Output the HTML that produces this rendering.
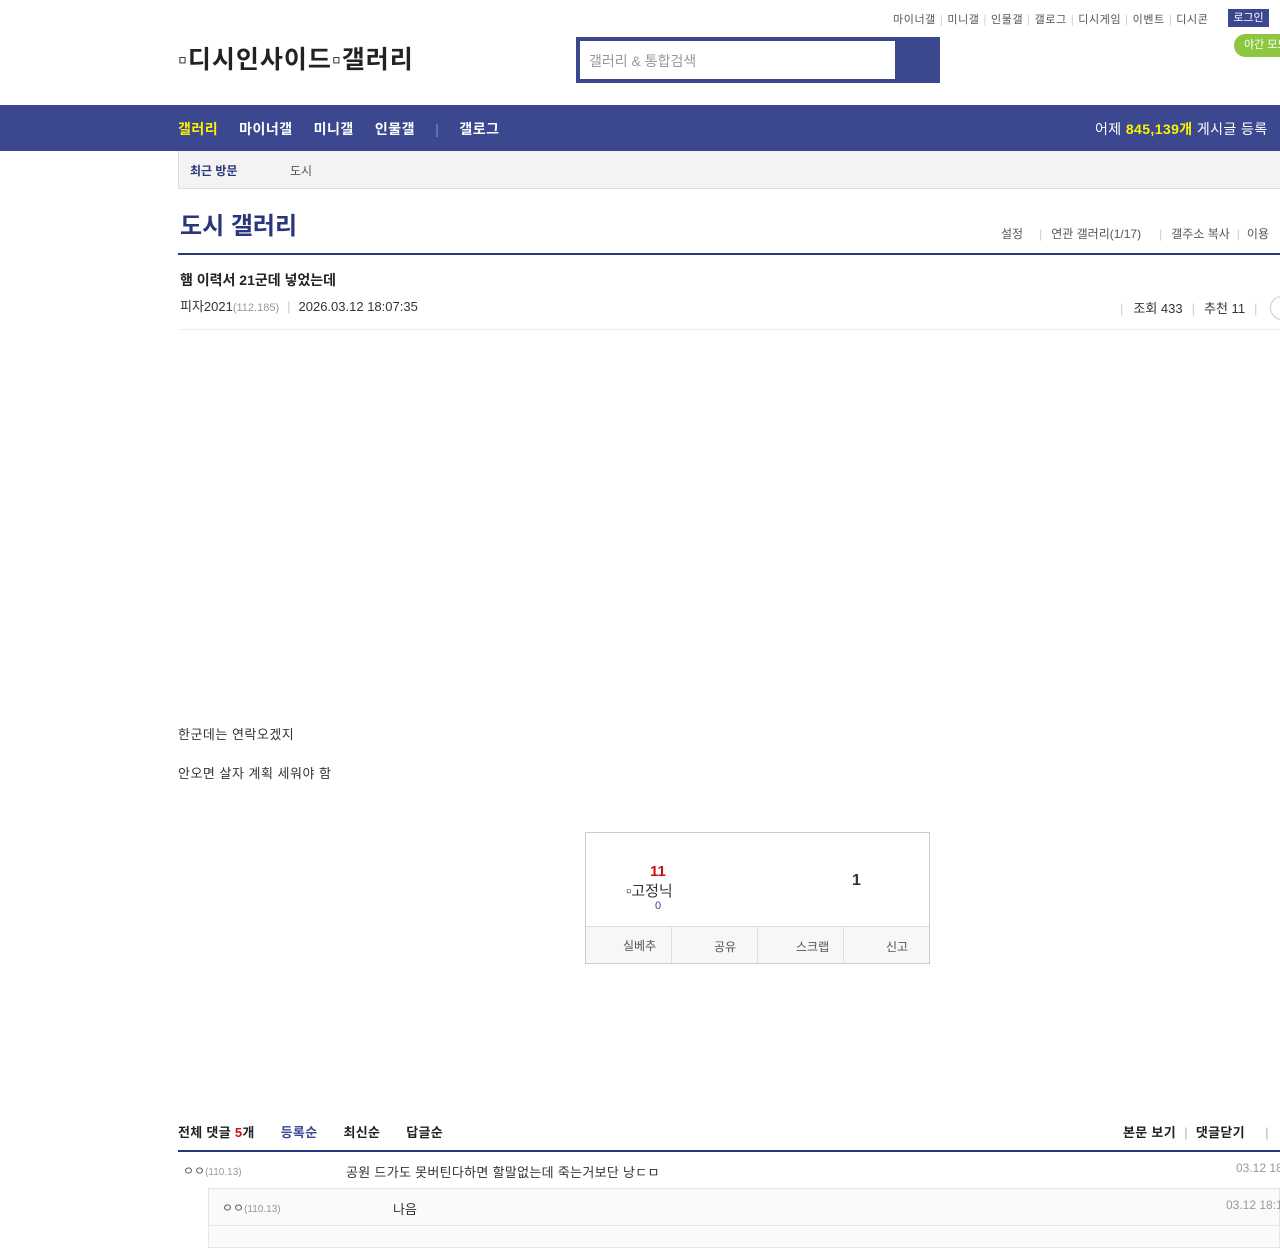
<!DOCTYPE html>
<html><head><meta charset="utf-8"><style>
*{margin:0;padding:0;box-sizing:border-box}
body{width:1280px;height:1240px;position:relative;overflow:hidden;background:#fff;font-family:"Liberation Sans","Noto Sans CJK KR",sans-serif;color:#333}
.a{position:absolute;white-space:nowrap}
.sep{color:#ccc;margin:0 4px}
</style></head><body>
<div class="a" style="left:893px;top:11px;font-size:11px;color:#555;letter-spacing:0.6px">마이너갤<span class="sep">|</span>미니갤<span class="sep">|</span>인물갤<span class="sep">|</span>갤로그<span class="sep">|</span>디시게임<span class="sep">|</span>이벤트<span class="sep">|</span>디시콘</div>
<div class="a" style="left:1228px;top:9px;width:41px;height:18px;background:#3b4890;color:#fff;font-size:11px;text-align:center;line-height:18px">로그인</div>
<div class="a" style="left:1234px;top:34px;width:60px;height:23px;background:#8dc63f;border-radius:12px;color:#fff;font-size:11px;line-height:23px;padding-left:10px">야간 모드</div>
<div class="a" style="left:178px;top:40px;font-size:25px;font-weight:bold;color:#222;letter-spacing:1px">▫디시인사이드▫갤러리</div>
<div class="a" style="left:576px;top:37px;width:364px;height:46px;background:#3b4890"></div>
<div class="a" style="left:580px;top:41px;width:315px;height:38px;background:#fff;font-size:14px;color:#999;padding:10px 9px">갤러리 &amp; 통합검색</div>
<div class="a" style="left:0;top:105px;width:1280px;height:46px;background:#3b4890"></div>
<div class="a" style="left:178px;top:119px;font-size:14px;font-weight:bold;color:#fff;letter-spacing:0.5px"><span style="color:#fff200">갤러리</span><span style="margin-left:21px">마이너갤</span><span style="margin-left:21px">미니갤</span><span style="margin-left:21px">인물갤</span><span style="color:#6a76b0;margin:0 20px 0 20px">|</span>갤로그</div>
<div class="a" style="left:1095px;top:119px;font-size:14px;color:#fff;letter-spacing:0.4px">어제 <b style="color:#fff200">845,139개</b> 게시글 등록</div>
<div class="a" style="left:178px;top:151px;width:1110px;height:38px;background:#f3f3f3;border:1px solid #ddd;border-top:0"></div>
<div class="a" style="left:190px;top:162px;font-size:12px;font-weight:bold;color:#29367c">최근 방문</div>
<div class="a" style="left:290px;top:162px;font-size:12px;color:#555">도시</div>
<div class="a" style="left:180px;top:206px;font-size:24px;font-weight:bold;color:#29367c">도시 갤러리</div>
<div class="a" style="left:1001px;top:225px;font-size:12px;color:#555">설정<span class="sep" style="margin:0 9px 0 16px">|</span>연관 갤러리(1/17)<span class="sep" style="margin:0 9px 0 18px">|</span>갤주소 복사<span class="sep" style="margin:0 7px">|</span>이용</div>
<div class="a" style="left:178px;top:253px;width:1102px;height:2px;background:#29367c"></div>
<div class="a" style="left:180px;top:270px;font-size:14px;font-weight:bold;color:#222">햄 이력서 21군데 넣었는데</div>
<div class="a" style="left:180px;top:296px;font-size:13px;color:#333">피자2021<span style="font-size:11px;color:#999">(112.185)</span><span class="sep" style="margin:0 8px">|</span>2026.03.12 18:07:35</div>
<div class="a" style="left:1120px;top:298px;font-size:13px;color:#333"><span class="sep" style="margin:0 10px 0 0">|</span>조회 433<span class="sep" style="margin:0 9px">|</span>추천 11<span class="sep" style="margin:0 9px">|</span></div>
<div class="a" style="left:1270px;top:296px;width:24px;height:24px;border:1px solid #ccc;border-radius:12px"></div>
<div class="a" style="left:178px;top:329px;width:1102px;height:1px;background:#eee"></div>
<div class="a" style="left:178px;top:724px;font-size:13px;color:#333;letter-spacing:0.5px">한군데는 연락오겠지</div>
<div class="a" style="left:178px;top:763px;font-size:13px;color:#333;letter-spacing:0.5px">안오면 살자 계획 세워야 함</div>
<div class="a" style="left:585px;top:832px;width:345px;height:132px;border:1px solid #ccc"></div>
<div class="a" style="left:650px;top:863px;font-size:15px;font-weight:bold;color:#c3150f">11</div>
<div class="a" style="left:626px;top:880px;font-size:15px;color:#333">▫고정닉</div>
<div class="a" style="left:655px;top:900px;font-size:11px;color:#3b4890">0</div>
<div class="a" style="left:852px;top:872px;font-size:16px;font-weight:bold;color:#333">1</div>
<div class="a" style="left:586px;top:926px;width:343px;height:37px;background:#f7f7f7;border-top:1px solid #ddd;display:flex;font-size:12px;color:#555">
<div style="width:86px;border-right:1px solid #ddd;padding:10px 0 0 37px">실베추</div><div style="width:86px;border-right:1px solid #ddd;padding:11px 0 0 42px">공유</div><div style="width:86px;border-right:1px solid #ddd;padding:11px 0 0 38px">스크랩</div><div style="flex:1;padding:11px 0 0 42px">신고</div></div>
<div class="a" style="left:178px;top:1122px;font-size:13px;font-weight:bold;color:#222;letter-spacing:0.3px">전체 댓글 <span style="color:#c3150f">5</span>개<span style="color:#3b4890;margin-left:26px">등록순</span><span style="margin-left:26px">최신순</span><span style="margin-left:26px">답글순</span></div>
<div class="a" style="left:1123px;top:1122px;font-size:13px;font-weight:bold;color:#222;letter-spacing:0.3px">본문 보기<span class="sep" style="margin:0 8px">|</span>댓글닫기<span class="sep" style="margin-left:20px">|</span></div>
<div class="a" style="left:178px;top:1150px;width:1102px;height:2px;background:#29367c"></div>
<div class="a" style="left:183px;top:1162px;font-size:12px;color:#555">ㅇㅇ<span style="font-size:10px;color:#999">(110.13)</span></div>
<div class="a" style="left:346px;top:1162px;font-size:13px;color:#333;letter-spacing:0.3px">공원 드가도 못버틴다하면 할말없는데 죽는거보단 낭ㄷㅁ</div>
<div class="a" style="left:1236px;top:1161px;font-size:12px;color:#999">03.12 18:1</div>
<div class="a" style="left:208px;top:1188px;width:1072px;height:60px;background:#fafafa;border:1px solid #e5e5e5"></div>
<div class="a" style="left:208px;top:1225px;width:1072px;height:1px;background:#e5e5e5"></div>
<div class="a" style="left:222px;top:1199px;font-size:12px;color:#555">ㅇㅇ<span style="font-size:10px;color:#999">(110.13)</span></div>
<div class="a" style="left:393px;top:1199px;font-size:13px;color:#333">나음</div>
<div class="a" style="left:1226px;top:1198px;font-size:12px;color:#999">03.12 18:1</div>
</body></html>
